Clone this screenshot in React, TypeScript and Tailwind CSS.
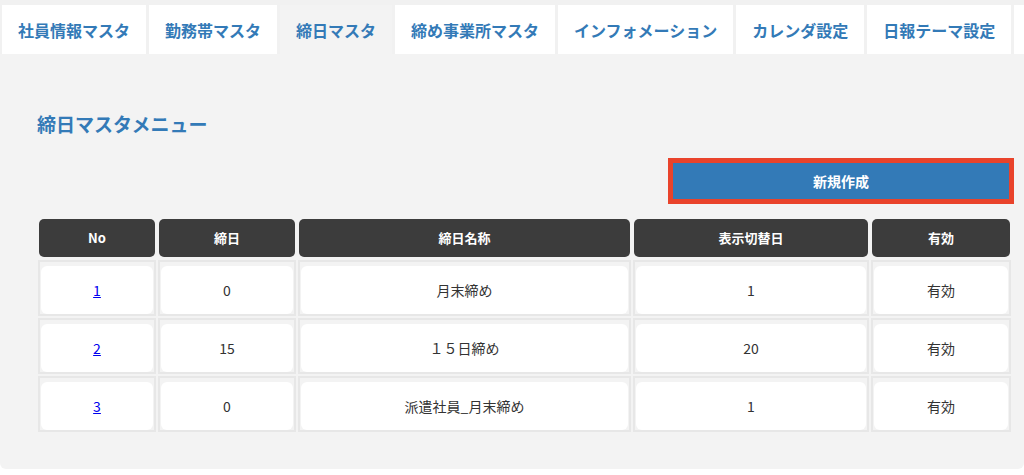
import { Fragment, type ReactNode } from "react";

const tabs = [
  { label: "社員情報マスタ" },
  { label: "勤務帯マスタ" },
  { label: "締日マスタ", active: true },
  { label: "締め事業所マスタ" },
  { label: "インフォメーション" },
  { label: "カレンダ設定" },
  { label: "日報テーマ設定" },
];

const headers = ["No", "締日", "締日名称", "表示切替日", "有効"];

const rows = [
  { no: "1", day: "0", name: "月末締め", sw: "1", valid: "有効" },
  { no: "2", day: "15", name: "１５日締め", sw: "20", valid: "有効" },
  { no: "3", day: "0", name: "派遣社員_月末締め", sw: "1", valid: "有効" },
];

function Cell({ children }: { children: ReactNode }) {
  return (
    <div className="h-[56px] border-2 border-[#e7e7e7] bg-[#f3f3f3] pt-1 px-px">
      <div className="h-full bg-white rounded-md flex items-center justify-center text-[14px] text-[#333]">
        {children}
      </div>
    </div>
  );
}

export default function App() {
  return (
    <div className="w-[1024px] h-[475px] bg-white overflow-hidden font-['Noto_Sans_CJK_JP','Noto_Sans',sans-serif]">
      {/* tabs */}
      <div className="flex h-[54px] pt-[5px] pl-[2px] gap-[3px] bg-[#f1f1f1] overflow-hidden">
        {tabs.map((t) => (
          <div
            key={t.label}
            className={
              t.active
                ? "h-[49px] px-4 flex items-center shrink-0 bg-[#f3f3f3] text-[16px] font-bold text-[#337ab7]"
                : "h-[49px] px-4 flex items-center shrink-0 bg-white text-[16px] font-bold text-[#337ab7]"
            }
          >
            {t.label}
          </div>
        ))}
        <div className="h-[49px] w-[40px] shrink-0 bg-white" />
      </div>

      {/* panel */}
      <div className="h-[415px] bg-[#f3f3f3] rounded-b-md pt-[57px] pl-[38px] pr-[10px]">
        <h3 className="-ml-px h-[26px] leading-[26px] text-[19px] font-bold text-[#337ab7]">
          締日マスタメニュー
        </h3>

        <div className="mt-[21px] flex justify-end">
          <button className="w-[346px] h-[46px] border-[5px] border-[#e9432b] bg-[#337ab7] text-white text-[14px] font-bold">
            新規作成
          </button>
        </div>

        <div className="mt-[15px] w-[973px] grid grid-cols-[118px_138px_333px_236px_140px] gap-[2px]">
          {headers.map((h) => (
            <div
              key={h}
              className="mx-px mb-px h-[38px] rounded-[5px] bg-[#3c3c3c] flex items-center justify-center text-white text-[13px] font-bold"
            >
              {h}
            </div>
          ))}
          {rows.map((r) => (
            <Fragment key={r.no}>
              <Cell>
                <a href="#" className="text-[#0000ee] underline">
                  {r.no}
                </a>
              </Cell>
              <Cell>{r.day}</Cell>
              <Cell>{r.name}</Cell>
              <Cell>{r.sw}</Cell>
              <Cell>{r.valid}</Cell>
            </Fragment>
          ))}
        </div>
      </div>
    </div>
  );
}
